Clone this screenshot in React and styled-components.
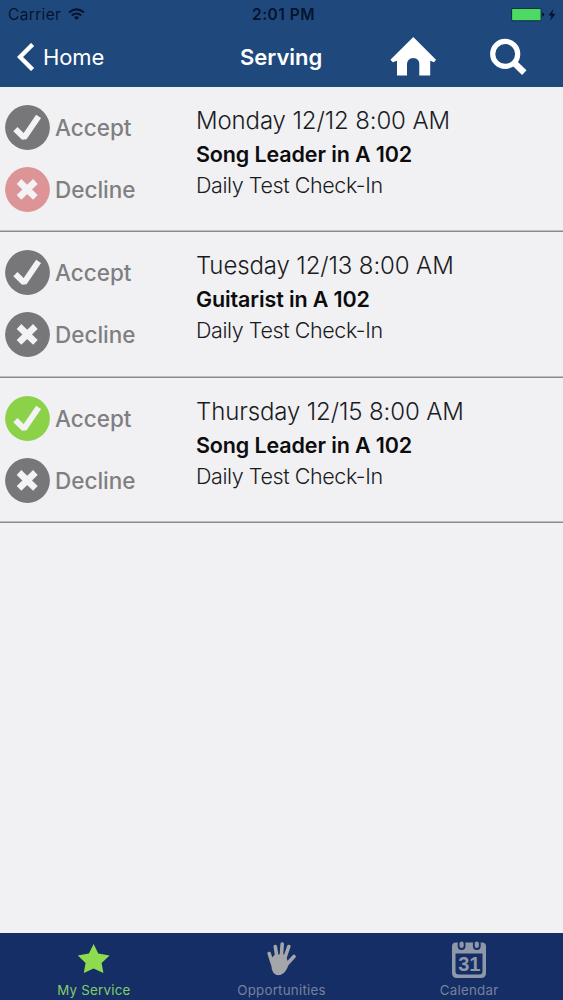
import React from "react";
import styled, { createGlobalStyle } from "styled-components";

const GlobalStyle = createGlobalStyle`
  * {
    box-sizing: border-box;
  }

  body {
    margin: 0;
    background: #f1f1f4;
    font-family: Inter, "Liberation Sans", sans-serif;
  }
`;

const Screen = styled.div`
  display: flex;
  flex-direction: column;
  height: 1000px;
  overflow: hidden;
  white-space: nowrap;
`;

const Header = styled.header`
  height: 87px;
  flex: none;
  background: #1f497d;
`;

const StatusBar = styled.div`
  display: grid;
  grid-template-columns: 252px 1fr auto;
  align-items: center;
  height: 29px;
  padding-right: 7px;
  color: #06132e;
  font-size: 15.5px;
  line-height: 29px;
`;

const Carrier = styled.div`
  display: flex;
  align-items: center;
  gap: 7px;
  padding-left: 8px;
  letter-spacing: 0.35px;
`;

const Clock = styled.div`
  font-weight: 600;
  letter-spacing: 0.5px;
`;

const Power = styled.div`
  display: flex;
  align-items: center;
  gap: 3px;

  svg {
    display: block;
  }
`;

const NavBar = styled.nav`
  display: grid;
  grid-template-columns: 240px 149px 101px 1fr;
  align-items: center;
  height: 56px;
  color: white;
  font-size: 22px;
  line-height: 56px;

  svg {
    display: block;
  }
`;

const BackLink = styled.div`
  display: flex;
  align-items: center;
  gap: 8px;
  padding-left: 17px;
  letter-spacing: -0.1px;
`;

const Title = styled.div`
  font-weight: 600;
`;

const List = styled.main`
  flex: 1;
`;

const Row = styled.section`
  display: grid;
  grid-template-columns: 196px 1fr;
  height: 145.33px;
  box-shadow: inset 0 -1.5px #8a8a8d;
`;

const Answers = styled.div`
  display: flex;
  flex-direction: column;
  gap: 17px;
  padding: 18px 0 0 5px;
`;

const Answer = styled.div`
  display: flex;
  align-items: center;
  gap: 5px;
  height: 45px;
  color: #7f7f82;
  font-size: 22.5px;
  font-weight: 500;

  svg {
    display: block;
    flex: none;
  }
`;

const Details = styled.div`
  padding-top: 17px;
  color: #1b1b1e;
`;

const When = styled.div`
  font-size: 24px;
  font-weight: 300;
  line-height: 34px;
  letter-spacing: -0.12px;
`;

const Role = styled.div`
  color: #0c0c0e;
  font-size: 21.5px;
  font-weight: 600;
  line-height: 32px;
  letter-spacing: -0.12px;
`;

const Event = styled.div`
  font-size: 21.5px;
  font-weight: 300;
  line-height: 31px;
  letter-spacing: -0.42px;
`;

const TabBar = styled.footer`
  display: grid;
  grid-template-columns: repeat(3, 1fr);
  flex: none;
  height: 67px;
  background: #152e66;
`;

const Tab = styled.div`
  display: flex;
  flex-direction: column;
  align-items: center;
  padding-top: 6px;
  color: ${(props) => (props.$active ? "#84cd68" : "#75819c")};
  font-size: 13.3px;
  line-height: 20px;
  letter-spacing: 0.25px;

  svg {
    display: block;
    height: 41px;
  }
`;

function WifiIcon() {
  return (
    <svg width="17" height="13" viewBox="0 0 17 13" fill="none" stroke="currentColor" strokeWidth="2">
      <path d="M1 4.6Q8.5 -1.8 16 4.6" />
      <path d="M3.7 7.5Q8.5 3.4 13.3 7.5" />
      <path d="M5.9 9.3Q8.5 7.2 11.1 9.3L8.5 12Z" fill="currentColor" stroke="none" />
    </svg>
  );
}

function BatteryIcon() {
  return (
    <svg width="34" height="14" viewBox="0 0 34 14">
      <rect x="0.6" y="0.4" width="29.5" height="12.4" rx="1.4" fill="#4cd964" stroke="#0b2a3d" strokeWidth="1" />
      <path d="M31.3 4.5Q33.2 4.7 33.2 6.5T31.3 8.5Z" fill="#06132e" />
    </svg>
  );
}

function BoltIcon() {
  return (
    <svg width="8" height="12" viewBox="0 0 8 12">
      <path d="M5.2 0L0.5 6.6H3.5L2 12L7.6 4.8H4.4Z" fill="currentColor" />
    </svg>
  );
}

function BackIcon() {
  return (
    <svg width="18" height="28" viewBox="0 0 18 28" fill="none" stroke="white" strokeWidth="4.4">
      <path d="M15.6 1.5L3 14L15.6 26.5" />
    </svg>
  );
}

function HomeIcon() {
  return (
    <svg width="48" height="40" viewBox="0 0 48 40" fill="white">
      <path d="M24.3 0L47 22.8L45 25.3L41.2 23.8V38.6H30.3V27.5Q30.3 21 24.3 21T18 27.5V38.6H8V23.8L3.8 25.3L1.4 22.8Z" />
    </svg>
  );
}

function SearchIcon() {
  return (
    <svg width="37" height="38" viewBox="0 0 37 38" fill="none" stroke="white">
      <circle cx="15.2" cy="15.9" r="12.5" strokeWidth="5.2" />
      <path d="M23.5 24.2L34.3 34.6" strokeWidth="6.4" />
    </svg>
  );
}

function CheckIcon({ color }) {
  return (
    <svg width="45" height="45" viewBox="0 0 45 45">
      <circle cx="22.5" cy="22.5" r="22.4" fill={color} />
      <path
        d="M10.4 24.2L19.1 32.6L33.6 11.4"
        fill="none"
        stroke="#f3f3f5"
        strokeWidth="6"
        strokeLinejoin="bevel"
      />
    </svg>
  );
}

function CrossIcon({ color }) {
  return (
    <svg width="45" height="45" viewBox="0 0 45 45">
      <circle cx="22.5" cy="22.5" r="22.4" fill={color} />
      <path d="M14 14.5L30.4 30.3M30.4 14.5L14 30.3" fill="none" stroke="#f3f3f5" strokeWidth="6.6" />
    </svg>
  );
}

function StarIcon() {
  return (
    <svg width="34" height="41" viewBox="0 0 34 41">
      <path
        d="M16.6 5L21.3 14.6L32.6 16.4L24.6 24L26.4 34L16.6 29.4L6.8 34L8.6 24L0.8 16.4L11.9 14.6Z"
        fill="#8fdb50"
      />
    </svg>
  );
}

function HandIcon() {
  return (
    <svg width="30" height="41" viewBox="0 0 30 41" fill="none" stroke="#a4a6aa" strokeWidth="3.6" strokeLinecap="round">
      <path d="M6.5 25L3.2 14.5M11 19L9.3 7.5M15.2 19L16.2 5M18.5 20L22.8 7.5M21 25L28 17.5" />
      <path
        d="M4.6 20L9 15.5H19.5L21.5 21.5L23 24.5Q20 34 15 35.8Q8 37.8 5.8 30Z"
        fill="#a4a6aa"
        stroke="none"
      />
    </svg>
  );
}

function CalendarIcon() {
  return (
    <svg width="36" height="41" viewBox="0 0 36 41">
      <path
        d="M5 3.4H31Q35 3.4 35 7.4V34Q35 39 30 39H6Q1 39 1 34V7.4Q1 3.4 5 3.4ZM4.5 14.5V32.5Q4.5 35.5 7.5 35.5H28.5Q31.5 35.5 31.5 32.5V14.5Z"
        fill="#8f98a8"
        fillRule="evenodd"
      />
      <rect x="7.6" y="1.5" width="6" height="8.5" rx="3" fill="#8f98a8" stroke="#152e66" strokeWidth="1.8" />
      <rect x="22.8" y="1.5" width="6" height="8.5" rx="3" fill="#8f98a8" stroke="#152e66" strokeWidth="1.8" />
      <text
        x="18.3"
        y="32"
        textAnchor="middle"
        fontFamily="Liberation Sans"
        fontWeight="700"
        fontSize="20"
        letterSpacing="0"
        fill="#8f98a8"
      >
        31
      </text>
    </svg>
  );
}

const GRAY = "#77777a";

const services = [
  { when: "Monday 12/12 8:00 AM", role: "Song Leader in A 102", accept: GRAY, decline: "#dc9496" },
  { when: "Tuesday 12/13 8:00 AM", role: "Guitarist in A 102", accept: GRAY, decline: GRAY },
  { when: "Thursday 12/15 8:00 AM", role: "Song Leader in A 102", accept: "#8bd249", decline: GRAY },
];

function ServiceRow({ service }) {
  return (
    <Row>
      <Answers>
        <Answer>
          <CheckIcon color={service.accept} />
          Accept
        </Answer>
        <Answer>
          <CrossIcon color={service.decline} />
          Decline
        </Answer>
      </Answers>
      <Details>
        <When>{service.when}</When>
        <Role>{service.role}</Role>
        <Event>Daily Test Check-In</Event>
      </Details>
    </Row>
  );
}

export default function App() {
  return (
    <Screen>
      <GlobalStyle />
      <Header>
        <StatusBar>
          <Carrier>
            Carrier
            <WifiIcon />
          </Carrier>
          <Clock>2:01 PM</Clock>
          <Power>
            <BatteryIcon />
            <BoltIcon />
          </Power>
        </StatusBar>
        <NavBar>
          <BackLink>
            <BackIcon />
            Home
          </BackLink>
          <Title>Serving</Title>
          <HomeIcon />
          <SearchIcon />
        </NavBar>
      </Header>
      <List>
        {services.map((service) => (
          <ServiceRow key={service.when} service={service} />
        ))}
      </List>
      <TabBar>
        <Tab $active>
          <StarIcon />
          My Service
        </Tab>
        <Tab>
          <HandIcon />
          Opportunities
        </Tab>
        <Tab>
          <CalendarIcon />
          Calendar
        </Tab>
      </TabBar>
    </Screen>
  );
}
